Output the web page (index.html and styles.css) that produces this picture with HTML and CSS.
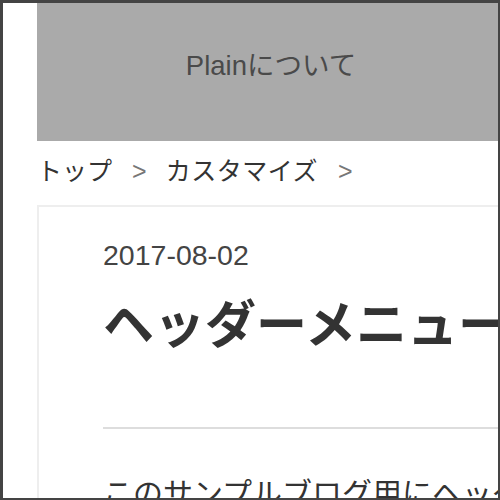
FILE: index.html
```html
<!DOCTYPE html>
<html lang="ja">
<head>
<meta charset="utf-8">
<title>ヘッダーメニュー</title>
<link rel="stylesheet" href="styles.css">
</head>
<body>
<div class="frame">
  <div class="page">
    <header class="site-header">
      <a class="nav-link" href="#">Plainについて</a>
    </header>
    <nav class="breadcrumb">
      <a class="crumb" href="#">トップ</a>
      <span class="sep">&gt;</span>
      <a class="crumb crumb-wide" href="#">カスタマイズ</a>
      <span class="sep">&gt;</span>
    </nav>
    <article class="entry">
      <div class="date">2017-08-02</div>
      <h1 class="title">ヘッダーメニューの作り方</h1>
      <hr class="divider">
      <p class="body">このサンプルブログ用にヘッダーメニューを作りました。</p>
    </article>
  </div>
</div>
</body>
</html>
```

FILE: styles.css
```css
html, body {
  margin: 0;
  padding: 0;
  background: #ffffff;
}

.frame {
  box-sizing: border-box;
  width: 500px;
  height: 500px;
  overflow: hidden;
  border-style: solid;
  border-color: #444444;
  border-width: 3px 2px 2px 3px;
  background: #ffffff;
  font-family: "Liberation Sans", "Noto Sans CJK JP", sans-serif;
  color: #333333;
}

.page {
  margin-left: 34px;
  width: 468px;
}

.site-header {
  box-sizing: border-box;
  height: 138px;
  background: #aaaaaa;
  display: flex;
  justify-content: center;
  align-items: flex-start;
  padding-top: 49px;
}

.nav-link {
  font-size: 27.5px;
  line-height: 27px;
  color: #4a4a4a;
  text-decoration: none;
  white-space: nowrap;
}

.breadcrumb {
  display: flex;
  align-items: baseline;
  margin: 18px 0 21px 0;
  font-size: 25px;
  line-height: 25px;
  white-space: nowrap;
}

.crumb {
  color: #333333;
  text-decoration: none;
}

.crumb-wide {
  letter-spacing: 0.5px;
}

.sep {
  color: #777777;
  margin: 0 19px 0 20px;
}

.entry {
  width: 700px;
  border: 2px solid #eeeeee;
  padding: 34px 64px 0 64px;
}

.date {
  font-size: 28.5px;
  line-height: 28px;
  color: #444444;
}

.title {
  margin: 31px 0 0 0;
  font-size: 51px;
  line-height: 51px;
  font-weight: bold;
  color: #333333;
  white-space: nowrap;
}

.divider {
  margin: 76px 0 0 0;
  border: 0;
  height: 2px;
  background: #dddddd;
}

.body {
  margin: 50px 0 0 0;
  font-size: 30px;
  line-height: 30px;
  white-space: nowrap;
}
```
